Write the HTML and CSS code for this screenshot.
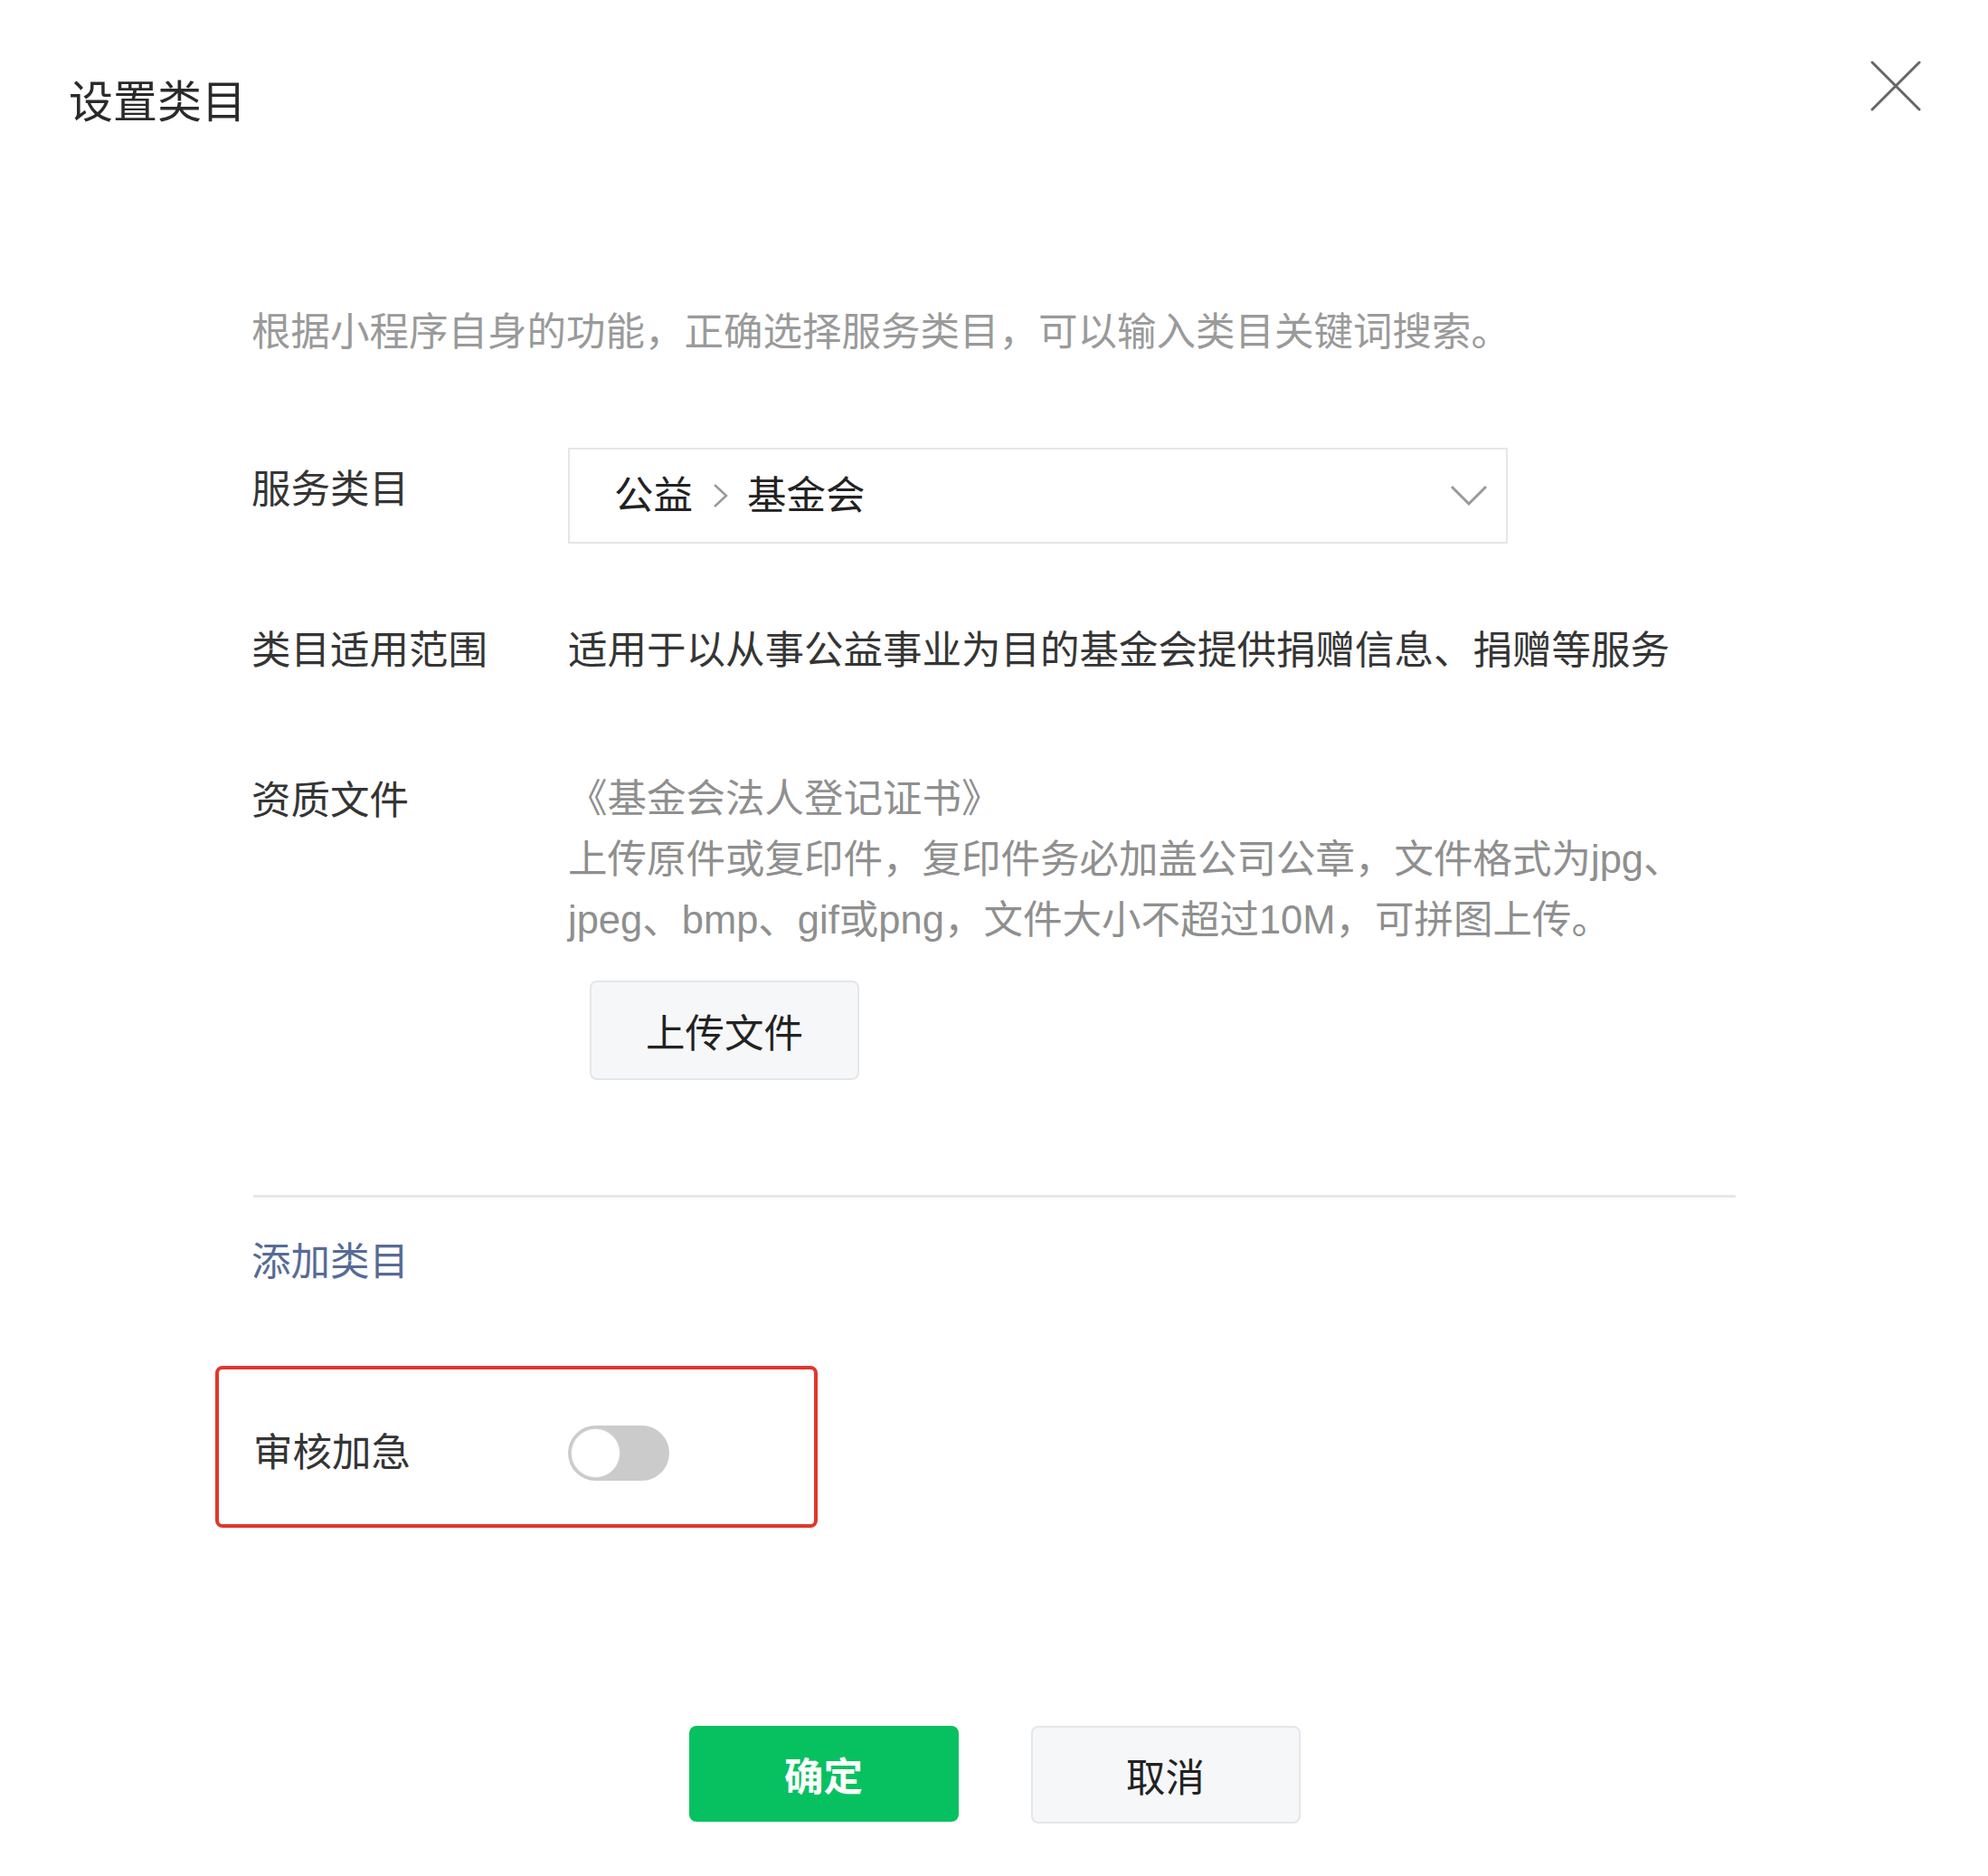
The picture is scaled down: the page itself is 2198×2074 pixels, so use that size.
FILE: index.html
```html
<!DOCTYPE html>
<html lang="zh-CN">
<head>
<meta charset="utf-8">
<title>设置类目</title>
<link rel="stylesheet" href="styles.css">
</head>
<body>
<div class="dialog">
  <div class="dialog-hd">
    <h2 class="dialog-title">设置类目</h2>
    <button class="dialog-close" type="button" aria-label="关闭">
      <svg width="56" height="56" viewBox="0 0 56 56"><path d="M2 2 L54 54 M54 2 L2 54" stroke="#666" stroke-width="3" fill="none" stroke-linecap="round"/></svg>
    </button>
  </div>
  <div class="dialog-bd">
    <p class="desc">根据小程序自身的功能，正确选择服务类目，可以输入类目关键词搜索。</p>

    <div class="form-row row-service">
      <div class="form-label">服务类目</div>
      <div class="select">
        <span class="select-text">公益</span>
        <svg class="sep" width="20" height="28" viewBox="0 0 20 28"><polyline points="4,2 17,14 4,26" stroke="#999" stroke-width="2.5" fill="none"/></svg>
        <span class="select-text">基金会</span>
        <svg class="arrow" width="42" height="24" viewBox="0 0 42 24"><polyline points="2,2 21,21 40,2" stroke="#999" stroke-width="3" fill="none"/></svg>
      </div>
    </div>

    <div class="form-row row-scope">
      <div class="form-label">类目适用范围</div>
      <div class="form-value dark">适用于以从事公益事业为目的基金会提供捐赠信息、捐赠等服务</div>
    </div>

    <div class="form-row row-qual">
      <div class="form-label">资质文件</div>
      <div class="form-value qual">
        <div class="qual-text">《基金会法人登记证书》<br>上传原件或复印件，复印件务必加盖公司公章，文件格式为jpg、<br>jpeg、bmp、gif或png，文件大小不超过10M，可拼图上传。</div>
        <button class="btn btn-default btn-upload" type="button">上传文件</button>
      </div>
    </div>

    <div class="divider"></div>

    <a class="add-link" href="#">添加类目</a>

    <div class="urgent-box">
      <div class="form-label urgent-label">审核加急</div>
      <div class="switch"><span class="switch-knob"></span></div>
    </div>
  </div>
  <div class="dialog-ft">
    <button class="btn btn-primary" type="button">确定</button>
    <button class="btn btn-default" type="button">取消</button>
  </div>
</div>
</body>
</html>
```

FILE: styles.css
```css
* { box-sizing: border-box; }
html, body {
  margin: 0;
  padding: 0;
  background: #fff;
}
body {
  font-family: "Liberation Sans", "Noto Sans CJK SC", sans-serif;
  color: #353535;
  width: 2198px;
  min-height: 2074px;
}
.dialog {
  width: 2198px;
}
.dialog-hd {
  display: flex;
  justify-content: space-between;
  align-items: flex-start;
  padding: 67px 74px 0 76px;
}
.dialog-title {
  margin: 13px 0 0 0;
  font-size: 49px;
  line-height: 66px;
  font-weight: 400;
  color: #2a2a2a;
}
.dialog-close {
  width: 56px;
  height: 56px;
  padding: 0;
  border: 0;
  background: transparent;
  display: block;
}
.dialog-close svg { display: block; }

.dialog-bd {
  padding: 0 279px 0 278px;
  font-size: 43.5px;
}
.desc {
  margin: 188px 0 0 0;
  line-height: 66px;
  color: #9a9a9a;
}
.form-row {
  display: flex;
  align-items: flex-start;
}
.form-label {
  width: 350px;
  flex: none;
  line-height: 66px;
  color: #353535;
}
.row-service { margin-top: 95px; }
.row-service .form-label { margin-top: 13px; }
.select {
  width: 1039px;
  height: 106px;
  border: 2px solid #e6e6e8;
  display: flex;
  align-items: center;
  padding: 0 20px 0 49px;
  background: #fff;
}
.select-text { color: #222; line-height: 66px; }
.sep { margin: 0 20px; flex: none; }
.arrow { margin-left: auto; flex: none; }

.row-scope { margin-top: 85px; }
.form-value { line-height: 66px; }
.form-value.dark { color: #353535; }

.row-qual { margin-top: 100px; }
.qual { margin-top: -2px; }
.qual-text {
  line-height: 67px;
  color: #8f8f8f;
}
.btn {
  font-family: inherit;
  font-size: 43.5px;
  width: 298px;
  height: 108px;
  border-radius: 8px;
  display: flex;
  align-items: center;
  justify-content: center;
  padding: 0;
  cursor: pointer;
}
.btn-default {
  background: #f6f7f9;
  border: 2px solid #e4e6ea;
  color: #222;
}
.btn-upload {
  margin: 33px 0 0 24px;
  height: 110px;
}
.btn-primary {
  background: #07c160;
  border: 2px solid #07c160;
  color: #fff;
  font-weight: 700;
  height: 106px;
}

.divider {
  margin: 127px 0 0 2px;
  height: 3px;
  background: #e7e7e9;
}
.add-link {
  display: block;
  margin-top: 38px;
  line-height: 66px;
  color: #576b95;
  text-decoration: none;
  width: max-content;
}
.urgent-box {
  margin: 82px 0 0 -40px;
  width: 666px;
  border: 4px solid #e2372c;
  border-radius: 8px;
  padding: 59px 0 46px 38px;
  display: flex;
  align-items: center;
}
.urgent-label { width: 348px; }
.switch {
  width: 112px;
  height: 61px;
  border-radius: 31px;
  background: #cbcbcb;
  padding: 4px;
  display: flex;
  align-items: center;
}
.switch-knob {
  width: 53px;
  height: 53px;
  border-radius: 50%;
  background: #fff;
  box-shadow: 0 0 0 1px #d6d6d6;
}

.dialog-ft {
  margin-top: 219px;
  display: flex;
  justify-content: center;
  gap: 80px;
  padding-left: 1px;
}
```
